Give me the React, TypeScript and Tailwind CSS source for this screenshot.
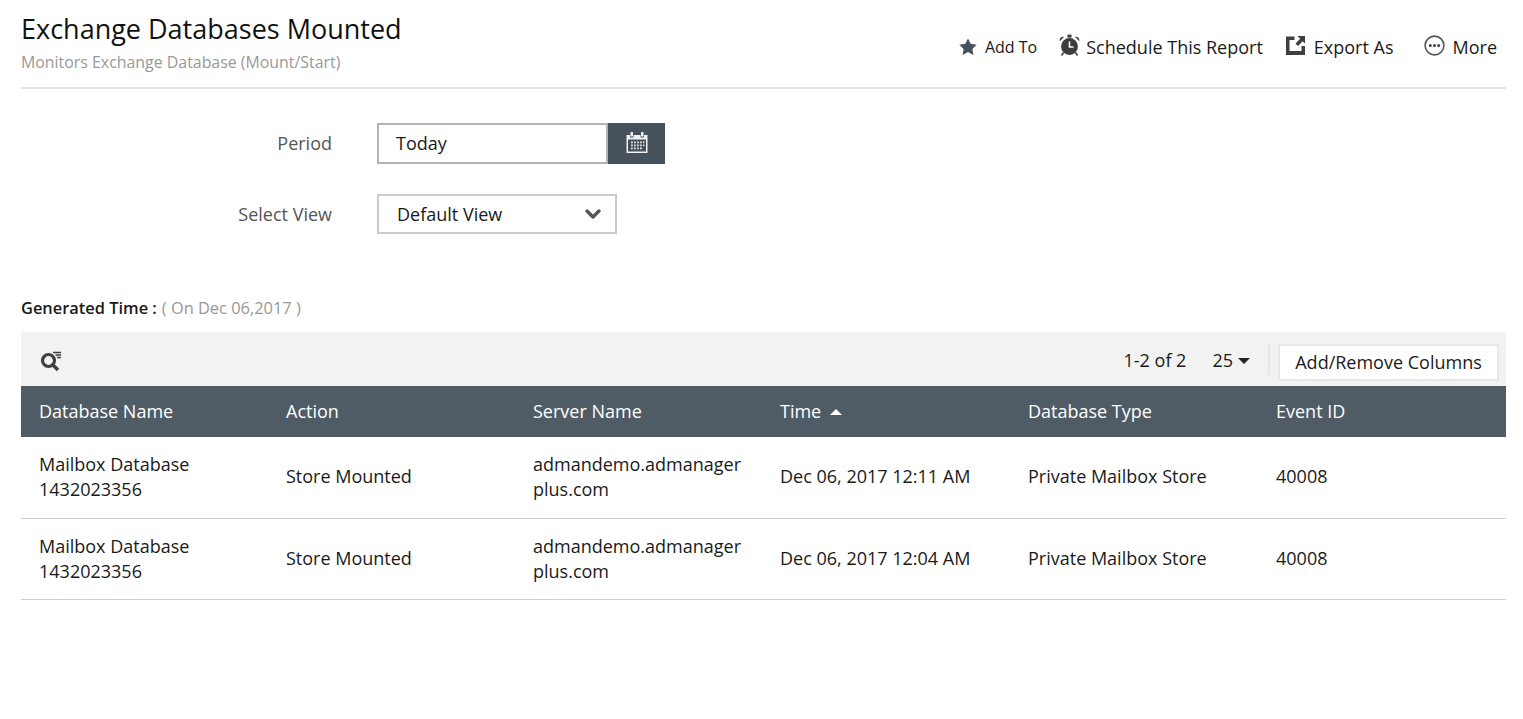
import { ChevronDown } from 'lucide-react';

const columns = ['Database Name', 'Action', 'Server Name', 'Time', 'Database Type', 'Event ID'];

const rows = [
  { time: 'Dec 06, 2017 12:11 AM' },
  { time: 'Dec 06, 2017 12:04 AM' },
];

function StarIcon() {
  return (
    <svg width="18" height="18" viewBox="0 0 18 18" className="mr-[8px] mb-[1px]">
      <path d="M9 .4l2.7 5.4 6 .9-4.3 4.2 1 6-5.4-2.8-5.4 2.800 1-6L.3 6.700l6-.9z" fill="#46535c" />
    </svg>
  );
}

function AlarmIcon() {
  return (
    <svg width="21" height="23" viewBox="0 0 21 23" className="mr-[6px] mb-[4px]">
      <circle cx="10.500" cy="12.500" r="8.400" fill="#3d3d3d" />
      <path d="M.6 7.200C.2 4.400 2.300 2.400 5 2.900zM20.400 7.200c.4-2.800-1.700-4.800-4.400-4.300z" fill="#3d3d3d" />
      <rect x="8.500" y="0.600" width="4" height="3" fill="#3d3d3d" />
      <path d="M4.500 18.500l-2 3M16.500 18.500l2 3" stroke="#3d3d3d" strokeWidth="1.600" />
      <path d="M10.500 7.500v5.500h4" stroke="#fff" strokeWidth="1.600" fill="none" />
    </svg>
  );
}

function ExportIcon() {
  return (
    <svg width="20" height="19" viewBox="0 0 20 19" className="mr-[8px] mb-[4px]">
      <path d="M0 .500h8.500v3.500H3.500v11h12v-5h3.500v9H0z" fill="#3f3f3f" />
      <path d="M11.500 0h7.500v7.500l-2.300-2.300-4.700 4.800-2.500-2.500 4.700-4.700z" fill="#3f3f3f" />
    </svg>
  );
}

function MoreIcon() {
  return (
    <svg width="21" height="21" viewBox="0 0 21 21" className="mr-[8px] mb-[4px]">
      <circle cx="10.500" cy="10.500" r="9.400" fill="none" stroke="#555" strokeWidth="1.600" />
      <circle cx="6.300" cy="10.500" r="1.500" fill="#444" />
      <circle cx="10.500" cy="10.500" r="1.500" fill="#444" />
      <circle cx="14.700" cy="10.500" r="1.500" fill="#444" />
    </svg>
  );
}

function CalendarIcon() {
  return (
    <svg width="22" height="23" viewBox="0 0 22 23" className="mb-[2px]">
      <path d="M.5 4h3.500v2.500h3.500V4h7v2.500H18V4h3.500v18H.5z" fill="#f2f2f2" />
      <rect x="4.500" y="1" width="2.500" height="4.500" fill="#f2f2f2" />
      <rect x="15" y="1" width="2.500" height="4.500" fill="#f2f2f2" />
      <rect x="2" y="8.500" width="18" height="12" fill="#45525b" />
      <path
        d="M5 10.500h1.800v1.800H5zM8 10.500h1.800v1.800H8zM11 10.500h1.800v1.800H11zM14 10.500h1.800v1.800H14zM17 10.500h1.400v1.800H17zM5 13.500h1.800v1.800H5zM8 13.500h1.800v1.800H8zM11 13.500h1.800v1.800H11zM14 13.500h1.800v1.800H14zM17 13.500h1.400v1.800H17zM5 16.500h1.800v1.800H5zM8 16.500h1.800v1.800H8zM11 16.500h1.800v1.800H11zM14 16.500h1.800v1.800H14z"
        fill="#dfe2e4"
      />
    </svg>
  );
}

function SearchFilterIcon() {
  return (
    <svg width="22" height="21" viewBox="0 0 22 21" className="mt-[4px]">
      <circle cx="8.500" cy="9.500" r="6" fill="none" stroke="#3f3f3f" strokeWidth="3.200" />
      <path d="M12.500 13.500l5.500 5.500" stroke="#3f3f3f" strokeWidth="3.400" />
      <path d="M13 1.500h8M15.500 4h5.500M17 6.500h4" stroke="#3f3f3f" strokeWidth="1.300" />
    </svg>
  );
}

export default function App() {
  return (
    <div className="h-[719px] overflow-hidden bg-white pl-[21px] pr-[17px] text-[#1a1a1a] font-['Open_Sans',sans-serif]">
      {/* header */}
      <div className="h-[89px] flex justify-between border-b-2 border-[#e2e2e2]">
        <div className="pt-[11px]">
          <h1 className="text-[27px] leading-[36px] text-[#111]">Exchange Databases Mounted</h1>
          <p className="text-[15.9px] leading-[20px] mt-[5px] text-[#999]">Monitors Exchange Database (Mount/Start)</p>
        </div>
        <div className="flex items-center h-[94px] text-[18px] pr-[9px]">
          <div className="flex items-center mr-[22px] text-[16px]"><StarIcon />Add To</div>
          <div className="flex items-center mr-[23px]"><AlarmIcon />Schedule This Report</div>
          <div className="flex items-center mr-[30px]"><ExportIcon />Export As</div>
          <div className="flex items-center"><MoreIcon />More</div>
        </div>
      </div>

      {/* filters */}
      <div className="mt-[34px] flex items-center h-[41px]">
        <label className="w-[311px] text-right text-[18px] text-[#555]">Period</label>
        <div className="ml-[45px] w-[231px] h-[41px] border-2 border-[#b3b3b3] pl-[17px] flex items-center text-[18px]">Today</div>
        <div className="w-[57px] h-[41px] bg-[#45525b] flex items-center justify-center"><CalendarIcon /></div>
      </div>
      <div className="mt-[30px] flex items-center h-[40px]">
        <label className="w-[311px] text-right text-[18px] text-[#555]">Select View</label>
        <div className="ml-[45px] w-[240px] h-[40px] border-2 border-[#cbcbcb] pl-[18px] pr-[10px] flex items-center justify-between text-[18px]">
          Default View
          <ChevronDown size={24} strokeWidth={3.4} className="text-[#555]" />
        </div>
      </div>

      {/* generated time */}
      <div className="mt-[62px] h-[24px] flex items-center text-[16.4px]">
        <span className="font-semibold">Generated Time :</span>
        <span className="ml-[5px] text-[#999]">( On Dec 06,2017 )</span>
      </div>

      {/* toolbar */}
      <div className="mt-[12px] h-[54px] bg-[#f2f2f2] flex items-center justify-between pl-[19px] pr-[7px]">
        <SearchFilterIcon />
        <div className="flex items-center text-[18px] pt-[7px]">
          <span className="mt-[-4px]">1-2 of 2</span>
          <span className="ml-[26px] mt-[-4px]">25</span>
          <span className="ml-[5px] mt-[-4px] border-x-[6px] border-t-[6px] border-x-transparent border-t-[#222]" />
          <span className="ml-[18px] mt-[-6px] w-[2px] h-[31px] bg-[#e6e6e6]" />
          <button className="ml-[8px] w-[221px] h-[37px] bg-white border-2 border-[#e6e9e8] text-[18px]">Add/Remove Columns</button>
        </div>
      </div>

      {/* table */}
      <table className="w-full table-fixed text-[18px]">
        <colgroup>
          <col className="w-[247px]" />
          <col className="w-[247px]" />
          <col className="w-[247px]" />
          <col className="w-[248px]" />
          <col className="w-[248px]" />
          <col />
        </colgroup>
        <thead>
          <tr className="h-[51px] bg-[#4f5c65] text-white">
            {columns.map((col) => (
              <th key={col} className="pl-[18px] text-left font-normal">
                {col}
                {col === 'Time' && (
                  <span className="inline-block ml-[9px] mb-[3px] border-x-[6px] border-b-[6px] border-x-transparent border-b-white" />
                )}
              </th>
            ))}
          </tr>
        </thead>
        <tbody>
          {rows.map((row) => (
            <tr key={row.time} className="h-[81px] border-b border-[#cfcfcf] leading-[25px]">
              <td className="pl-[18px]">Mailbox Database<br />1432023356</td>
              <td className="pl-[18px] pb-[1px]">Store Mounted</td>
              <td className="pl-[18px]">admandemo.admanager<br />plus.com</td>
              <td className="pl-[18px] pb-[1px]">{row.time}</td>
              <td className="pl-[18px] pb-[1px]">Private Mailbox Store</td>
              <td className="pl-[18px] pb-[1px]">40008</td>
            </tr>
          ))}
        </tbody>
      </table>
    </div>
  );
}
